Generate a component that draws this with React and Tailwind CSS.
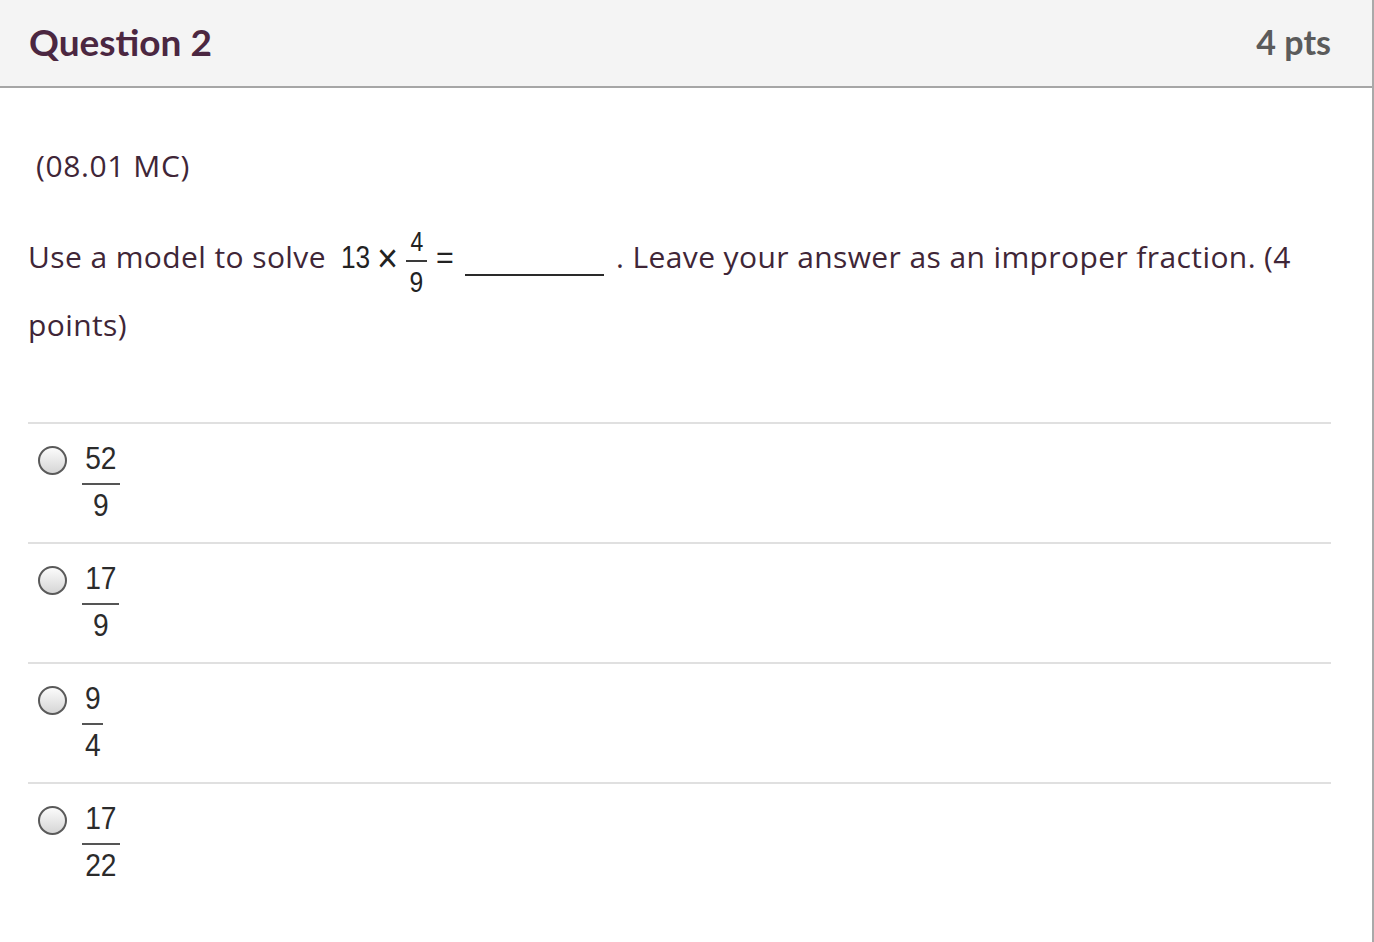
export default function App() {
  const opts = [
    ["52", "9", "w-[38px]"],
    ["17", "9", "w-[37px]"],
    ["9", "4", "w-[21px]"],
    ["17", "22", "w-[38px]"],
  ];
  const arial = { fontFamily: "'Liberation Sans', Arial, sans-serif" };
  return (
    <div className="w-[1374px] h-[942px] bg-white overflow-hidden">
      <div className="w-[1374px] h-[942px] border-r-2 border-[#a9a9a9]">
        <div className="h-[88px] bg-[#f4f4f4] border-b-2 border-[#a6a6a6] flex items-center justify-between pl-[29px] pr-[41px]" style={{ fontFamily: "Lato, 'Noto Sans', sans-serif" }}>
          <div className="text-[37px] font-bold text-[#4b2741] leading-none -mt-[4px]">Question 2</div>
          <div className="text-[34px] font-bold text-[#5b5b5b] leading-none -mt-[2px]">4 pts</div>
        </div>
        <div className="pl-[28px] pr-[41px] text-[#3f2637] tracking-[0.4px]" style={{ fontFamily: "'Open Sans', 'Noto Sans', sans-serif" }}>
          <div className="pt-[58px] pl-[8px] text-[30px] leading-[40px] tracking-[0.6px]">(08.01 MC)</div>
          <div className="mt-[38px] text-[30px] leading-[65px]">
            Use a model to solve
            <span className="inline-block ml-[15px] w-[36px] text-[32px] text-[#222] leading-none tracking-normal" style={arial}>
              <span className="inline-block scale-x-[0.82] origin-left">13</span>
            </span>
            <span className="inline-block w-[21px] text-[40px] text-[#222] leading-[30px] tracking-normal align-[-4px]" style={arial}>
              <span className="inline-block scale-x-[0.9] origin-left">×</span>
            </span>
            <span className="inline-flex flex-col items-center w-[21px] ml-[8px] align-[17px] text-[#222] tracking-normal" style={arial}>
              <span className="text-[28px] leading-[24px] inline-block scale-x-[0.82]">4</span>
              <span className="w-[21px] h-[2px] bg-[#3a3a3a] mt-[6px] mb-[10px]"></span>
              <span className="text-[30px] leading-[20px] inline-block scale-x-[0.82]">9</span>
            </span>
            <span className="inline-block ml-[9px] w-[19px] text-[32px] text-[#222] leading-none tracking-normal" style={arial}>
              <span className="inline-block scale-x-[0.95] origin-left">=</span>
            </span>
            <span className="inline-block ml-[10px] w-[139px] h-0 border-b-2 border-[#2a2a2a] align-[-8px]"></span>
            <span className="ml-[12px]">. Leave your answer as an improper fraction. (4 points)</span>
          </div>
          <div className="mt-[65px]">
            {opts.map(([n, d, w], i) => (
              <div key={i} className="h-[120px] border-t-2 border-[#e0e0e0] flex items-start pt-[18px] pl-[10px]">
                <div className="w-[29px] h-[29px] rounded-full border-2 border-[#5a5a5a] bg-gradient-to-b from-[#fbfbfb] to-[#d6d6d6] mt-[4px] shrink-0"></div>
                <div className="ml-[15px] flex flex-col items-center text-[#2b2b2b] text-[32px] tracking-normal" style={arial}>
                  <span className="leading-[32px] inline-block scale-x-[0.88]">{n}</span>
                  <span className={"h-[2px] bg-[#555] mt-[9px] mb-[4px] " + w}></span>
                  <span className="leading-[32px] inline-block scale-x-[0.88]">{d}</span>
                </div>
              </div>
            ))}
          </div>
        </div>
      </div>
    </div>
  );
}
